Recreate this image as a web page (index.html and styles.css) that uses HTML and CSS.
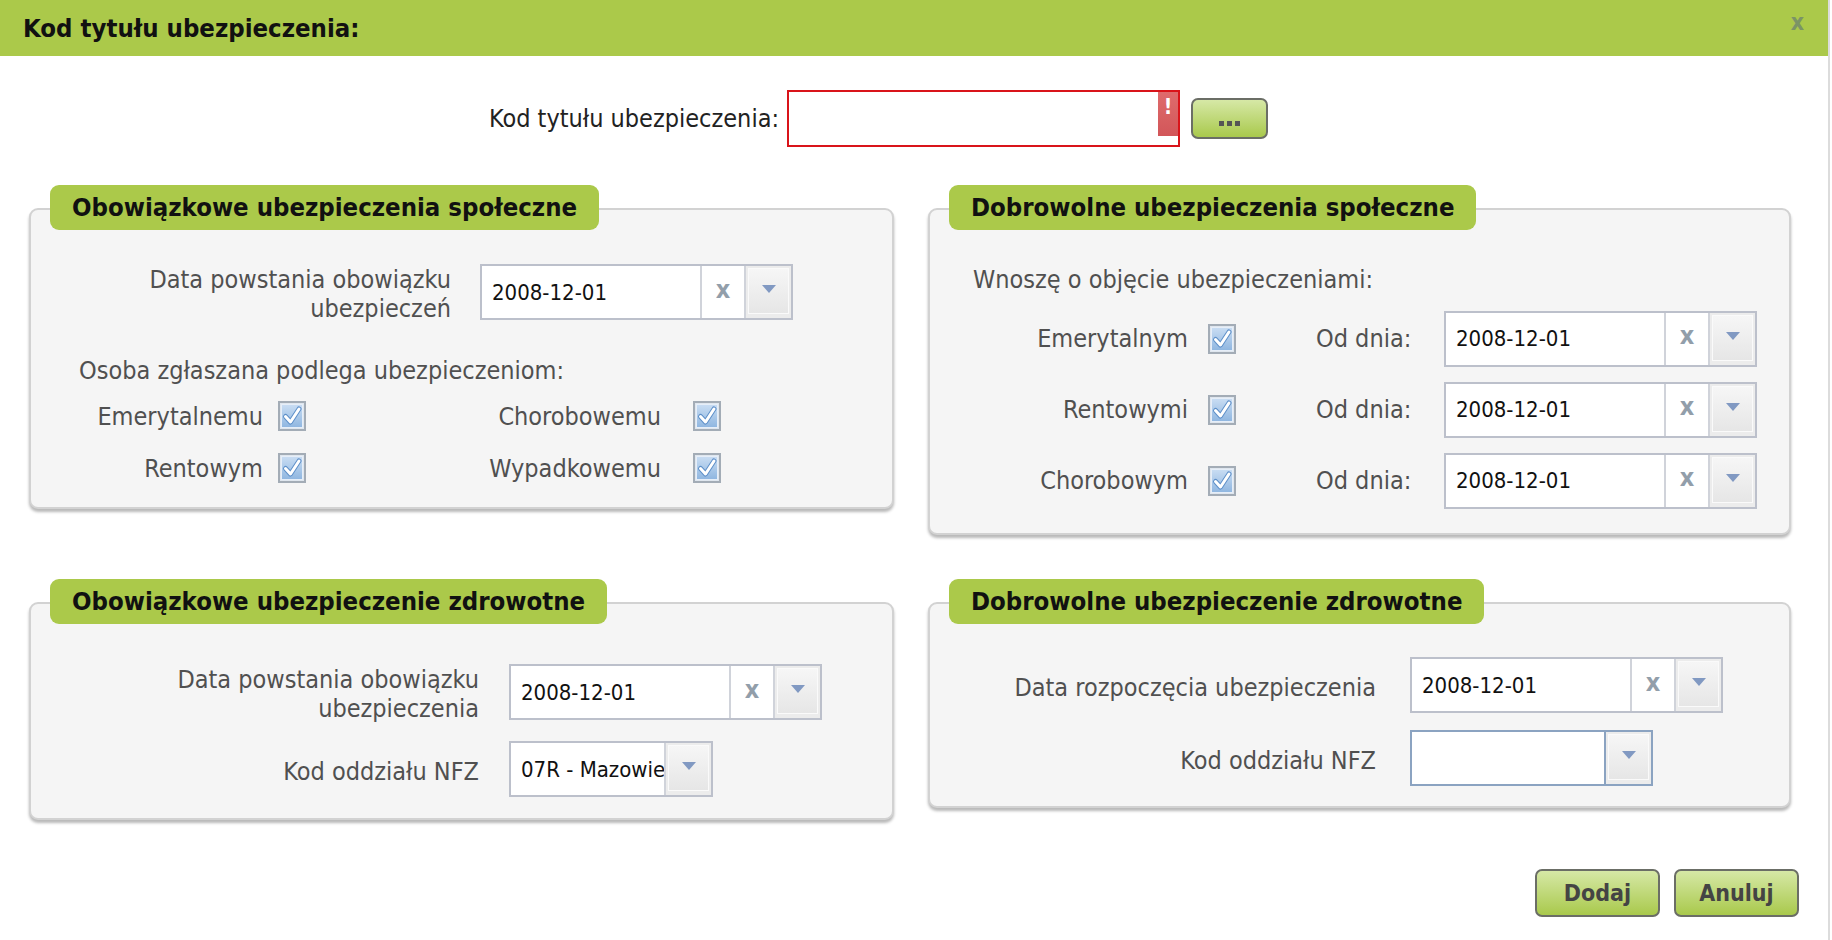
FILE: index.html
```html
<!DOCTYPE html>
<html lang="pl">
<head>
<meta charset="utf-8">
<title>Kod tytułu ubezpieczenia</title>
<link rel="stylesheet" href="styles.css">
</head>
<body>
<svg class="defs" width="0" height="0" aria-hidden="true">
  <defs>
    <linearGradient id="g1" x1="0" y1="0" x2="0" y2="1">
      <stop offset="0" stop-color="#c9ddf3"/>
      <stop offset="1" stop-color="#8fb6e0"/>
    </linearGradient>
    <symbol id="cbx" viewBox="0 0 28 30">
      <rect x="1" y="1" width="26" height="28" fill="#dfe6ee" stroke="#a3acb6" stroke-width="2"/>
      <rect x="3.5" y="3.5" width="21" height="23" fill="url(#g1)" stroke="#e6eef8" stroke-width="1"/>
      <path d="M7.5 15.5 L12.5 21 L21 8" fill="none" stroke="#5d8fc9" stroke-width="5" stroke-linecap="round" stroke-linejoin="round"/>
      <path d="M7.5 15.5 L12.5 21 L21 8" fill="none" stroke="#ffffff" stroke-width="3" stroke-linecap="round" stroke-linejoin="round"/>
    </symbol>
  </defs>
</svg>
<div class="dialog">
  <div class="header">
    <span class="title">Kod tytułu ubezpieczenia:</span>
    <span class="close">x</span>
  </div>
  <div class="content">
    <div class="code-row">
      <label class="code-label">Kod tytułu ubezpieczenia:</label>
      <div class="code-input"><span class="err">!</span></div>
      <button class="btn btn-dots"><span class="dots"><i></i><i></i><i></i></span></button>
    </div>

    <div class="panels">
      <section class="panel">
        <div class="panel-box pb1">
          <div class="legend">Obowiązkowe ubezpieczenia społeczne</div>
          <div class="form-row r1">
            <div class="flabel w420">Data powstania obowiązku<br>ubezpieczeń</div>
            <div class="date-field"><span class="val">2008-12-01</span><span class="clr">x</span><span class="dd"><span class="ddi"><i class="tri"></i></span></span></div>
          </div>
          <div class="note n1">Osoba zgłaszana podlega ubezpieczeniom:</div>
          <div class="cb-grid">
            <div class="cbl l1">Emerytalnemu</div>
            <div class="cb"><svg width="28" height="30"><use href="#cbx"/></svg></div>
            <div class="cbl l2">Chorobowemu</div>
            <div class="cb"><svg width="28" height="30"><use href="#cbx"/></svg></div>
            <div class="cbl l1">Rentowym</div>
            <div class="cb"><svg width="28" height="30"><use href="#cbx"/></svg></div>
            <div class="cbl l2">Wypadkowemu</div>
            <div class="cb"><svg width="28" height="30"><use href="#cbx"/></svg></div>
          </div>
        </div>
      </section>

      <section class="panel">
        <div class="panel-box pb2">
          <div class="legend">Dobrowolne ubezpieczenia społeczne</div>
          <div class="note n2">Wnoszę o objęcie ubezpieczeniami:</div>
          <div class="vol-grid">
            <div class="cbl vl">Emerytalnym</div>
            <div class="cb"><svg width="28" height="30"><use href="#cbx"/></svg></div>
            <div class="cbl od">Od dnia:</div>
            <div class="date-field"><span class="val">2008-12-01</span><span class="clr">x</span><span class="dd"><span class="ddi"><i class="tri"></i></span></span></div>

            <div class="cbl vl">Rentowymi</div>
            <div class="cb"><svg width="28" height="30"><use href="#cbx"/></svg></div>
            <div class="cbl od">Od dnia:</div>
            <div class="date-field"><span class="val">2008-12-01</span><span class="clr">x</span><span class="dd"><span class="ddi"><i class="tri"></i></span></span></div>

            <div class="cbl vl">Chorobowym</div>
            <div class="cb"><svg width="28" height="30"><use href="#cbx"/></svg></div>
            <div class="cbl od">Od dnia:</div>
            <div class="date-field"><span class="val">2008-12-01</span><span class="clr">x</span><span class="dd"><span class="ddi"><i class="tri"></i></span></span></div>
          </div>
        </div>
      </section>

      <section class="panel">
        <div class="panel-box pb3">
          <div class="legend">Obowiązkowe ubezpieczenie zdrowotne</div>
          <div class="form-row r3a">
            <div class="flabel w448">Data powstania obowiązku<br>ubezpieczenia</div>
            <div class="date-field"><span class="val">2008-12-01</span><span class="clr">x</span><span class="dd"><span class="ddi"><i class="tri"></i></span></span></div>
          </div>
          <div class="form-row r3b">
            <div class="flabel w448">Kod oddziału NFZ</div>
            <div class="select s3"><span class="val">07R - Mazowie</span><span class="dd"><span class="ddi"><i class="tri"></i></span></span></div>
          </div>
        </div>
      </section>

      <section class="panel">
        <div class="panel-box pb4">
          <div class="legend">Dobrowolne ubezpieczenie zdrowotne</div>
          <div class="form-row r4a">
            <div class="flabel w446">Data rozpoczęcia ubezpieczenia</div>
            <div class="date-field"><span class="val">2008-12-01</span><span class="clr">x</span><span class="dd"><span class="ddi"><i class="tri"></i></span></span></div>
          </div>
          <div class="form-row r4b">
            <div class="flabel w446">Kod oddziału NFZ</div>
            <div class="select s4"><span class="val"></span><span class="dd"><span class="ddi"><i class="tri"></i></span></span></div>
          </div>
        </div>
      </section>
    </div>

    <div class="actions">
      <button class="btn btn-act">Dodaj</button>
      <button class="btn btn-act">Anuluj</button>
    </div>
  </div>
</div>
</body>
</html>
```

FILE: styles.css
```css
* { box-sizing: border-box; }
html, body { margin: 0; padding: 0; background: #fff; }
body {
  font-family: "DejaVu Sans Condensed", "DejaVu Sans", sans-serif;
  font-stretch: condensed;
  width: 1832px;
  height: 940px;
  overflow: hidden;
}
.defs { position: absolute; width: 0; height: 0; }
.dialog {
  width: 1830px;
  height: 940px;
  border-right: 2px solid #dcdcdc;
  background: #fff;
}
.header {
  height: 56px;
  background: #abc94a;
  display: flex;
  align-items: center;
  justify-content: space-between;
  padding: 0 24px 0 23px;
}
.title {
  font-weight: bold;
  font-size: 25.5px;
  color: #111;
}
.close {
  font-weight: bold;
  font-size: 23px;
  color: #7b9466;
  margin-top: -12px;
}
.content { padding: 0; }

.code-row {
  display: flex;
  align-items: center;
  margin-top: 34px;
}
.code-label {
  width: 779px;
  text-align: right;
  font-size: 25px;
  color: #222;
  margin-right: 8px;
}
.code-input {
  width: 393px;
  height: 57px;
  border: 2px solid #d9141a;
  background: #fff;
  display: flex;
  justify-content: flex-end;
  align-items: flex-start;
}
.err {
  width: 20px;
  height: 44px;
  background: linear-gradient(#df6b6c, #d25659);
  color: #fff;
  font-weight: bold;
  font-size: 21px;
  text-align: center;
  line-height: 30px;
}
.btn {
  font-family: "DejaVu Sans Condensed", "DejaVu Sans", sans-serif;
  font-weight: bold;
  color: #444;
  border: 2px solid #6b6e66;
  border-radius: 7px;
  background: linear-gradient(#d6e8a6, #a9c94c);
  padding: 0;
}
.btn-dots {
  width: 77px;
  height: 41px;
  margin-left: 11px;
  display: flex;
  align-items: flex-end;
  justify-content: center;
  padding-bottom: 11px;
}
.dots { display: flex; gap: 3px; }
.dots i {
  display: block;
  width: 5px;
  height: 5px;
  background: #555;
}

.panels {
  display: grid;
  grid-template-columns: 865px 863px;
  column-gap: 34px;
  row-gap: 44px;
  align-items: start;
  margin: 38px 0 0 29px;
}
.panel-box {
  margin-top: 23px;
  border: 2px solid #d2d2d2;
  border-radius: 9px;
  background: #f5f5f5;
  box-shadow: 0 3px 3px rgba(0,0,0,0.28);
  padding: 0 0 10px 0;
}
.legend {
  display: inline-block;
  margin: -25px 0 0 19px;
  height: 45px;
  line-height: 45px;
  padding: 0 22px;
  background: #abc94a;
  border-radius: 9px;
  font-weight: bold;
  font-size: 25.5px;
  color: #111;
  vertical-align: top;
}
.form-row {
  display: flex;
  align-items: center;
}
.flabel {
  text-align: right;
  font-size: 25px;
  line-height: 29px;
  color: #505050;
  padding-top: 4px;
}
.w420 { width: 420px; margin-right: 29px; }
.w448 { width: 448px; margin-right: 30px; }
.w446 { width: 446px; margin-right: 34px; }
.r1 { margin-top: 31px; }

.note {
  font-size: 25px;
  line-height: 30px;
  color: #505050;
}
.n1 { margin: 33px 0 0 48px; }
.n2 { margin: 35px 0 0 43px; }

.cb-grid {
  display: grid;
  grid-template-columns: 247px 28px 387px 28px;
  grid-auto-rows: 52px;
  align-items: center;
  margin-top: 4px;
}
.pb1 { padding-bottom: 13px; }
.cbl {
  font-size: 25px;
  color: #505050;
}
.l1 { text-align: right; padding-right: 15px; }
.l2 { text-align: right; padding-right: 32px; }
.cb { height: 30px; }
.cb svg { display: block; }

.vol-grid {
  display: grid;
  grid-template-columns: 278px 28px 208px 313px;
  grid-auto-rows: 57px;
  row-gap: 14px;
  align-items: center;
  margin-top: 15px;
}
.vl { text-align: right; padding-right: 20px; }
.od { padding-left: 80px; }
.pb2 { padding-bottom: 24px; }

.date-field, .select {
  height: 56px;
  border: 2px solid #bcc0cb;
  background: #fff;
  display: flex;
  align-items: stretch;
}
.date-field { width: 313px; }
.val {
  flex: 1;
  display: flex;
  align-items: center;
  padding-left: 10px;
  font-size: 22px;
  color: #111;
  overflow: hidden;
  white-space: nowrap;
}
.clr {
  width: 44px;
  border-left: 2px solid #d0d3da;
  display: flex;
  align-items: center;
  justify-content: center;
  font-weight: bold;
  font-size: 25px;
  color: #929eaa;
  padding-bottom: 6px;
}
.dd {
  width: 47px;
  border-left: 2px solid #d0d3da;
  background: #ececec;
  padding: 2px 2px 4px 2px;
  display: flex;
}
.ddi {
  flex: 1;
  background: linear-gradient(#f6f6f6, #e6e6e6);
  border: 1px solid #fafafa;
  display: flex;
  align-items: center;
  justify-content: center;
}
.tri {
  width: 0;
  height: 0;
  border-left: 7px solid transparent;
  border-right: 7px solid transparent;
  border-top: 8px solid #8199c2;
  margin-top: -4px;
}
.s3 { width: 204px; }
.s3 .val { padding-left: 10px; }
.s4 { width: 243px; border-color: #8ba3c1; }
.s4 .dd { border-left-color: #8ba3c1; }

.r3a { margin-top: 37px; }
.r3b { margin-top: 18px; }
.pb3 { padding-bottom: 21px; }
.r4a { margin-top: 33px; }
.r4b { margin-top: 17px; }
.pb4 { padding-bottom: 20px; }

.actions {
  display: flex;
  justify-content: flex-end;
  gap: 14px;
  margin-top: 49px;
  padding-right: 29px;
}
.btn-act {
  width: 125px;
  height: 48px;
  font-size: 23px;
}
```
